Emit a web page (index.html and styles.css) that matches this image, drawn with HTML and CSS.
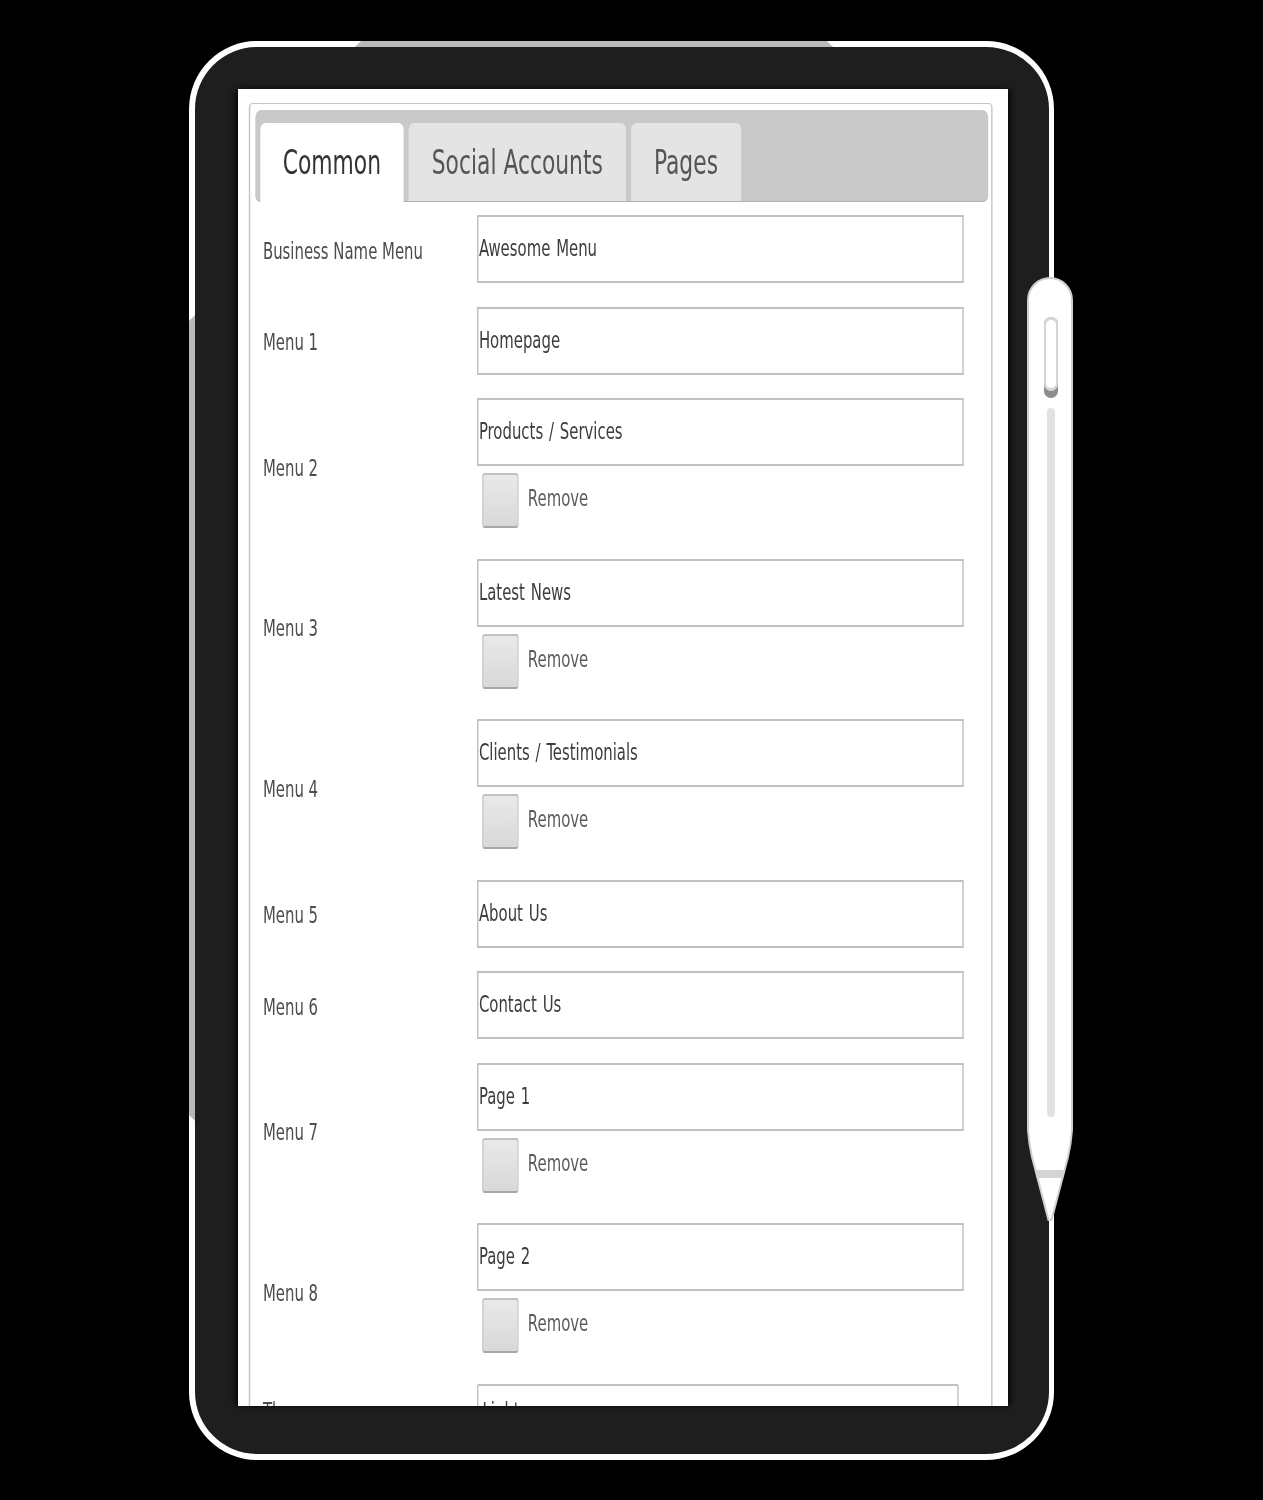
FILE: index.html
```html
<!DOCTYPE html>
<html lang="en">
<head>
<meta charset="utf-8">
<title>Menu settings</title>
<link rel="stylesheet" href="styles.css">
</head>
<body>
<div class="device">
  <div class="edge-top"></div>
  <div class="edge-left"></div>
  <main class="screen">
    <div class="squeeze">
      <div class="panel">
        <div class="tabbar">
          <div class="tab active">Common</div>
          <div class="tab">Social Accounts</div>
          <div class="tab">Pages</div>
        </div>
        <form class="form">
          <div class="row"><label class="label">Business Name Menu</label><div class="field"><div class="input">Awesome Menu</div></div></div>
          <div class="row"><label class="label">Menu 1</label><div class="field"><div class="input">Homepage</div></div></div>
          <div class="row tall"><label class="label">Menu 2</label><div class="field"><div class="input">Products / Services</div><div class="remove"><span class="check"></span><span class="remove-text">Remove</span></div></div></div>
          <div class="row tall"><label class="label">Menu 3</label><div class="field"><div class="input">Latest News</div><div class="remove"><span class="check"></span><span class="remove-text">Remove</span></div></div></div>
          <div class="row tall"><label class="label">Menu 4</label><div class="field"><div class="input">Clients / Testimonials</div><div class="remove"><span class="check"></span><span class="remove-text">Remove</span></div></div></div>
          <div class="row"><label class="label">Menu 5</label><div class="field"><div class="input">About Us</div></div></div>
          <div class="row"><label class="label">Menu 6</label><div class="field"><div class="input">Contact Us</div></div></div>
          <div class="row tall"><label class="label">Menu 7</label><div class="field"><div class="input">Page 1</div><div class="remove"><span class="check"></span><span class="remove-text">Remove</span></div></div></div>
          <div class="row tall"><label class="label">Menu 8</label><div class="field"><div class="input">Page 2</div><div class="remove"><span class="check"></span><span class="remove-text">Remove</span></div></div></div>
          <div class="row last"><label class="label">Theme</label><div class="field"><div class="input select">Light</div></div></div>
        </form>
      </div>
    </div>
  </main>
  <svg class="pen" viewBox="0 0 46 946" width="46" height="946" aria-hidden="true">
    <path d="M1 23a22 22 0 0 1 44 0V853q-1 14-4 27L24.500 943h-3L5 880q-3-13-4-27Z" fill="#fff" stroke="#cfcfcf" stroke-width="2"/>
    <path d="M8 893h30l-2 8H10Z" fill="#d4d4d4"/>
    <rect x="17" y="40" width="14" height="81" rx="7" fill="#8c8c8c"/>
    <rect x="17" y="40" width="14" height="74" rx="7" fill="#d6d6d6"/>
    <rect x="19" y="43" width="10" height="68" rx="5" fill="#fff"/>
    <rect x="20" y="131" width="8" height="709" rx="4" fill="#e2e2e2"/>
  </svg>
</div>
</body>
</html>
```
FILE: styles.css
```css
* { box-sizing: border-box; }
html, body { margin: 0; height: 1500px; background: #000; overflow: hidden; }
body { font-family: "DejaVu Sans Condensed", "DejaVu Sans", sans-serif; font-stretch: condensed; }
.device {
  position: relative;
  width: 865px;
  height: 1419px;
  margin: 41px 0 0 189px;
  background: #1e1e1e;
  border: 6px solid #fff;
  border-right-width: 5px;
  border-radius: 68px;
  padding: 42px 0 0 43px;
}
.edge-top {
  position: absolute; top: -6px; left: 160px;
  width: 478px; height: 6px;
  background: #b9b9b9;
  clip-path: polygon(6px 0, 472px 0, 478px 100%, 0 100%);
}
.edge-left {
  position: absolute; top: 268px; left: -6px;
  width: 6px; height: 806px;
  background: #b9b9b9;
  clip-path: polygon(0 6px, 100% 0, 100% 100%, 0 calc(100% - 6px));
}
.screen {
  width: 770px;
  height: 1317px;
  background: #fff;
  overflow: hidden;
  box-shadow: 4px 0 5px -1px #0a0a0a, -4px 0 5px -1px #0a0a0a;
}
.squeeze {
  width: 1069.400px;
  padding: 14px 0 0 15.300px;
  transform: scaleX(.72);
  transform-origin: 0 0;
  filter: blur(.4px);
}
.panel {
  width: 1033px;
  height: 1500px;
  border: 2px solid #c6c6c6;
  border-width: 1px 2px;
  border-radius: 5px 5px 0 0;
  padding: 6px 6px 0 6.300px;
}
.tabbar {
  width: 1018px;
  height: 92px;
  display: flex;
  align-items: flex-end;
  gap: 7px;
  padding-left: 7px;
  background: #c9c9c9;
  border-bottom: 1px solid #b3b3b3;
  border-radius: 8px 8px 7px 7px;
}
.tab {
  height: 78px;
  padding: 0 32px;
  background: #e4e4e4;
  border-radius: 7px 7px 0 0;
  color: #555;
  font-size: 33.700px;
  line-height: 80px;
}
.tab.active {
  height: 79px;
  margin-bottom: -1px;
  padding: 0 31.500px;
  background: #fff;
  color: #333;
}
.form { padding-top: 13px; }
.row {
  display: flex;
  align-items: center;
  height: 91.700px;
  padding-bottom: 23.700px;
}
.row.tall { height: 160.400px; padding-bottom: 24.400px; }
.row.last { height: 52px; padding-bottom: 0; }
.label {
  width: 308px;
  padding: 3px 0 0 11px;
  color: #4d4d4d;
  font-size: 23px;
  line-height: 26px;
  white-space: nowrap;
}
.field { width: 676px; align-self: flex-start; }
.input {
  height: 68px;
  border: 2px solid #c0c0c0;
  padding-left: 1px;
  color: #3d3d3d;
  font-size: 23px;
  line-height: 63px;
  word-spacing: 1.500px;
}
.input.select { width: 669px; border-radius: 3px; padding-left: 6px; line-height: 50px; }
.remove {
  display: flex;
  align-items: center;
  gap: 13px;
  height: 55px;
  margin: 7px 0 0 7px;
  color: #5c5c5c;
  font-size: 23px;
}
.remove-text { padding-bottom: 5px; }
.check {
  width: 51px;
  height: 55px;
  border: 2px solid #c2c2c2;
  border-bottom-color: #a8a8a8;
  border-radius: 4px;
  background: linear-gradient(#e9e9e9, #d8d8d8);
}
.pen { position: absolute; top: 230px; left: 832px; }
```
